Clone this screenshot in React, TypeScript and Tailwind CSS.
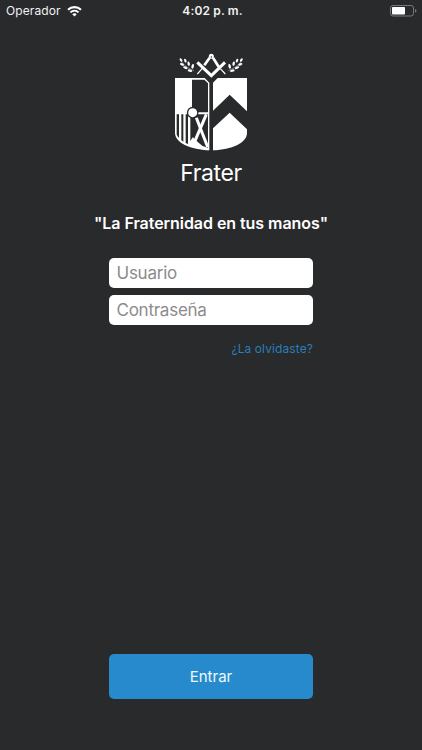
import { useState } from 'react';

const Leaves = () => (
  <g fill="#fff">
    <path d="M47 47 Q58 65 87 77" fill="none" stroke="#fff" strokeWidth="1.2" />
    <ellipse cx="48" cy="45" rx="5.5" ry="3.2" transform="rotate(50 48 45)" />
    <ellipse cx="61" cy="47" rx="6" ry="3.4" transform="rotate(70 61 47)" />
    <ellipse cx="51" cy="58" rx="6.5" ry="3.4" transform="rotate(22 51 58)" />
    <ellipse cx="71" cy="56" rx="6.5" ry="3.6" transform="rotate(78 71 56)" />
    <ellipse cx="61" cy="68" rx="7" ry="3.6" transform="rotate(20 61 68)" />
    <ellipse cx="83" cy="64" rx="7" ry="3.7" transform="rotate(105 83 64)" />
    <ellipse cx="75" cy="77" rx="7" ry="3.6" transform="rotate(12 75 77)" />
  </g>
);

const Logo = () => (
  <svg width="92" height="110" viewBox="0 0 276 330" role="img" aria-label="Frater">
    <Leaves />
    <g transform="translate(277 0) scale(-1 1)">
      <Leaves />
    </g>

    {/* compás y escuadra */}
    <g fill="none" stroke="#fff">
      <path d="M134 38 L118 61 M144 38 L161 65" strokeWidth="8" />
      <path d="M112 70 L97 87 M166 71 L181 87" strokeWidth="3.5" />
      <path d="M97 52 L139 92 L180 52" strokeWidth="9" />
    </g>
    <circle cx="139" cy="34" r="7.5" fill="#fff" />
    <circle cx="139" cy="36" r="2" fill="#292a2c" />

    {/* mitad izquierda del escudo */}
    <path d="M30 99 H119 L133 113 V316 C78 314 30 294 30 264 Z" fill="#fff" />
    <path d="M81 104 H118 L129 115 V202 H81 Z" fill="#292a2c" />
    <path d="M35 208 H42 V279 Q37 275 35 268 Z M49 208 H55 V290 L49 286 Z M62 208 H69 V297 L62 294 Z" fill="#292a2c" />
    <path d="M76 208 H129 V308 L76 292 Z" fill="#292a2c" />
    <path d="M70 296 L84 276 L89 284 L94 287 L115 305 L131 316 Q97 313 70 300 Z" fill="#fff" />
    <path d="M94 218 L128 306" stroke="#fff" strokeWidth="9" />
    <path d="M124 208 L89 290" stroke="#fff" strokeWidth="9" />
    <circle cx="83" cy="203" r="17.5" fill="#292a2c" />
    <circle cx="83" cy="203" r="13.5" fill="#fff" />

    {/* mitad derecha */}
    <path d="M144 113 L158 99 H246 V199 L194 149 L144 197 Z" fill="#fff" />
    <path d="M144 250 L194 203 L246 253 V264 C246 294 199 314 144 316 Z" fill="#fff" />
  </svg>
);

const StatusBar = () => (
  <header className="grid h-[22px] grid-cols-[1fr_auto_1fr] items-center pl-[6px] pr-[5px] text-[12px] text-[#f1f1f2]">
    <div className="flex items-center gap-[6px]">
      <span className="tracking-[0.1px]">Operador</span>
      <svg width="15" height="11" viewBox="0 0 15 11" fill="none" stroke="#fff">
        <path d="M1 3.8 C4.6 .2 10.4 .2 14 3.8" strokeWidth="2.1" />
        <path d="M3.4 6.4 C5.8 4.1 9.2 4.1 11.6 6.4" strokeWidth="2" />
        <path d="M7.5 10.4 L5.3 8.2 C6.5 7 8.5 7 9.7 8.2 Z" fill="#fff" stroke="none" />
      </svg>
    </div>
    <span className="pl-[2px] font-semibold tracking-[0.15px]">4:02 p. m.</span>
    <svg className="justify-self-end" width="27" height="12" viewBox="0 0 27 12">
      <rect x="0.5" y="0.5" width="23" height="10.5" rx="2.5" fill="none" stroke="#77787a" />
      <rect x="2" y="2" width="13" height="7.5" rx="0.8" fill="#fff" />
      <path d="M25 4 Q26.5 4.4 26.5 5.8 Q26.5 7.2 25 7.6 Z" fill="#77787a" />
    </svg>
  </header>
);

const inputClass =
  'h-[30px] w-full rounded-[5px] bg-white px-[7.5px] text-[17px] tracking-[-0.25px] text-gray-800 outline-none placeholder:text-[#8b8b8d]';

const App = () => {
  const [user, setUser] = useState('');
  const [password, setPassword] = useState('');

  return (
    <div className="flex h-screen w-full flex-col bg-[#292a2c] font-['Inter','Liberation_Sans',sans-serif]">
      <StatusBar />
      <main className="flex flex-1 flex-col items-center pt-[23px]">
        <Logo />
        <h1 className="mt-[3px] text-[23px] leading-[30px] tracking-[-0.4px] text-white">Frater</h1>
        <p className="mt-[23px] whitespace-nowrap text-[16px] font-semibold leading-[24px] tracking-[-0.05px] text-white">
          "La Fraternidad en tus manos"
        </p>
        <form
          className="mt-[23px] flex w-[204px] flex-1 flex-col pb-[51px]"
          onSubmit={(e) => e.preventDefault()}
        >
          <input
            className={inputClass}
            placeholder="Usuario"
            value={user}
            onChange={(e) => setUser(e.target.value)}
          />
          <input
            className={`${inputClass} mt-[7px]`}
            type="password"
            placeholder="Contraseña"
            value={password}
            onChange={(e) => setPassword(e.target.value)}
          />
          <a href="#" className="mt-[15px] self-end text-[12px] leading-[18px] tracking-[0.1px] text-[#2a7fb9]">
            ¿La olvidaste?
          </a>
          <button type="submit" className="mt-auto h-[45px] w-full rounded-[5px] bg-[#268acd] pt-px text-[15px] text-[#eef8ff]">
            Entrar
          </button>
        </form>
      </main>
    </div>
  );
};

export default App;
